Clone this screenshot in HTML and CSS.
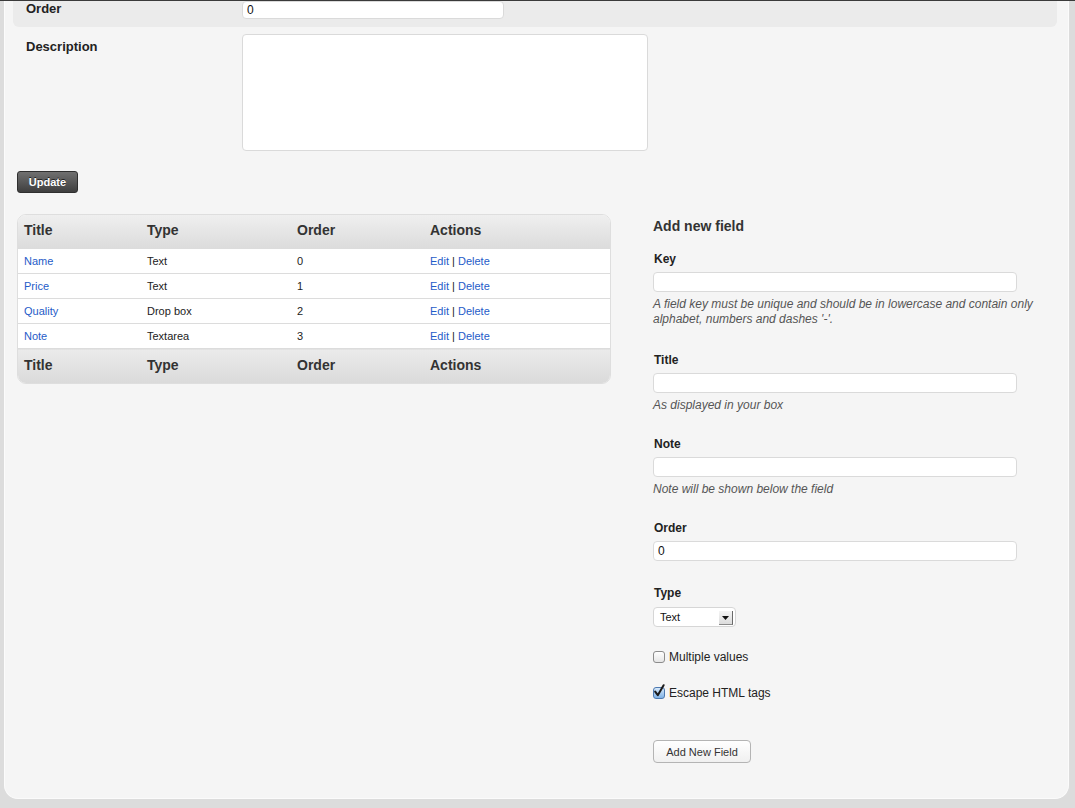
FILE: index.html
```html
<!DOCTYPE html>
<html>
<head>
<meta charset="utf-8">
<link rel="stylesheet" href="styles.css">
</head>
<body>
<div class="topline"></div>
<div class="panel">
  <div class="frow frow-shaded">
    <div class="flabel">Order</div>
    <div class="finput"><input class="txt txt-order" type="text" value="0"></div>
  </div>
  <div class="frow frow-desc">
    <div class="flabel flabel-desc">Description</div>
    <div class="finput"><textarea class="txt txt-desc"></textarea></div>
  </div>
  <button class="btn-dark">Update</button>

  <div class="cols">
    <div class="left">
      <div class="tbl-wrap">
        <table class="tbl">
          <colgroup><col class="c1"><col class="c2"><col class="c3"><col class="c4"></colgroup>
          <thead>
            <tr><th>Title</th><th>Type</th><th>Order</th><th>Actions</th></tr>
          </thead>
          <tbody>
            <tr><td><a href="#">Name</a></td><td>Text</td><td>0</td><td><a href="#">Edit</a> | <a href="#">Delete</a></td></tr>
            <tr><td><a href="#">Price</a></td><td>Text</td><td>1</td><td><a href="#">Edit</a> | <a href="#">Delete</a></td></tr>
            <tr><td><a href="#">Quality</a></td><td>Drop box</td><td>2</td><td><a href="#">Edit</a> | <a href="#">Delete</a></td></tr>
            <tr><td><a href="#">Note</a></td><td>Textarea</td><td>3</td><td><a href="#">Edit</a> | <a href="#">Delete</a></td></tr>
          </tbody>
          <tfoot>
            <tr><th>Title</th><th>Type</th><th>Order</th><th>Actions</th></tr>
          </tfoot>
        </table>
      </div>
    </div>
    <div class="right">
      <h3 class="rhead">Add new field</h3>
      <div class="grp grp-key">
        <div class="glabel">Key</div>
        <input class="txt txt-wide" type="text">
        <div class="gnote">A field key must be unique and should be in lowercase and contain only alphabet, numbers and dashes '-'.</div>
      </div>
      <div class="grp">
        <div class="glabel">Title</div>
        <input class="txt txt-wide" type="text">
        <div class="gnote">As displayed in your box</div>
      </div>
      <div class="grp">
        <div class="glabel">Note</div>
        <input class="txt txt-wide" type="text">
        <div class="gnote">Note will be shown below the field</div>
      </div>
      <div class="grp">
        <div class="glabel">Order</div>
        <input class="txt txt-wide" type="text" value="0">
      </div>
      <div class="grp grp-type">
        <div class="glabel glabel-type">Type</div>
        <div class="sel"><span class="sel-text">Text</span><span class="sel-arrow"><svg width="7" height="4" viewBox="0 0 7 4"><path d="M0 0H7L3.5 4Z" fill="#111"/></svg></span></div>
      </div>
      <div class="chk chk-first"><span class="cb"></span><span>Multiple values</span></div>
      <div class="chk"><span class="cb cb-on"><svg class="tick" width="12" height="14" viewBox="0 0 12 14"><path d="M2.2 7.6 L4.8 11.2 L10.6 1.2" fill="none" stroke="#1b1b1b" stroke-width="2" stroke-linecap="round" stroke-linejoin="round"/></svg></span><span>Escape HTML tags</span></div>
      <button class="btn-light">Add New Field</button>
    </div>
  </div>
</div>
</body>
</html>
```

FILE: styles.css
```css
html, body {
  margin: 0;
  padding: 0;
}
body {
  background: #dcdcdc;
  font-family: "Liberation Sans", Arial, Helvetica, sans-serif;
  color: #222;
  height: 808px;
  overflow: hidden;
}
.topline {
  height: 1px;
  background: #3a3a3a;
}
.panel {
  margin-left: 4px;
  width: 1065px;
  box-sizing: border-box;
  background: #f5f5f5;
  border: 1px solid #fbfbfb;
  border-top: none;
  border-radius: 0 0 14px 14px;
  padding: 0 15px 35px 12px;
}
.frow {
  display: flex;
  margin: 0 -4px;
  padding: 0 13px;
}
.frow-shaded {
  background: #ebebeb;
  border-radius: 0 0 6px 6px;
  padding-bottom: 8px;
}
.frow-desc {
  margin-top: 7px;
}
.flabel {
  width: 216px;
  flex: none;
  font-size: 13px;
  font-weight: bold;
  line-height: 16px;
  color: #222;
}
.flabel-desc {
  padding-top: 5px;
}
.txt {
  box-sizing: border-box;
  display: block;
  background: #fff;
  border: 1px solid #dadada;
  border-radius: 4px;
  font-family: "Liberation Sans", Arial, sans-serif;
  font-size: 12px;
  color: #111;
  padding: 0 4px;
  margin: 0;
  outline: none;
}
.txt-order {
  width: 262px;
  height: 18px;
}
.txt-desc {
  width: 406px;
  height: 117px;
  resize: none;
}
.btn-dark {
  display: block;
  margin-top: 20px;
  width: 61px;
  height: 22px;
  box-sizing: border-box;
  border: 1px solid #2f2f2f;
  border-radius: 3px;
  background: linear-gradient(#707070, #3f3f3f);
  color: #fff;
  font-family: "Liberation Sans", Arial, sans-serif;
  font-size: 11px;
  font-weight: bold;
  text-shadow: 0 -1px 0 #222;
  padding: 0;
}
.cols {
  display: flex;
  margin-top: 21px;
}
.left {
  width: 594px;
  flex: none;
}
.right {
  margin-left: 42px;
  flex: 1;
}
.tbl-wrap {
  border: 1px solid #dedede;
  border-radius: 9px;
  overflow: hidden;
  background: #fff;
}
.tbl {
  width: 100%;
  border-collapse: collapse;
  table-layout: fixed;
}
.c1 { width: 123px; }
.c2 { width: 150px; }
.c3 { width: 133px; }
.c4 { width: auto; }
.tbl th {
  text-align: left;
  font-size: 14px;
  font-weight: bold;
  color: #333;
  padding: 0 6px 3px;
  height: 30px;
  background: linear-gradient(#efefef, #dcdcdc);
}
.tbl tfoot th {
  height: 32px;
  padding-bottom: 2px;
  background: linear-gradient(#ebebeb, #dadada);
}
.tbl td {
  font-size: 11px;
  color: #222;
  padding: 0 6px;
  height: 24px;
  border-top: 1px solid #dcdcdc;
  background: #fff;
}
.tbl tbody tr:last-child td {
  border-bottom: 1px solid #dcdcdc;
}
.tbl a {
  color: #1f5cc8;
  text-decoration: none;
}
.rhead {
  margin: 4px 0 0;
  font-size: 14px;
  line-height: 17px;
  font-weight: bold;
  color: #333;
}
.grp {
  margin-top: 17px;
}
.grp + .grp {
  margin-top: 24px;
}
.grp-key {
  padding-bottom: 2px;
}
.grp-type {
  padding-top: 1px;
}
.glabel {
  font-size: 12px;
  font-weight: bold;
  line-height: 15px;
  color: #222;
  margin-bottom: 5px;
  padding-left: 1px;
}
.glabel-type {
  margin-bottom: 6px;
}
.txt-wide {
  width: 364px;
  height: 20px;
}
.gnote {
  margin-top: 5px;
  font-size: 12px;
  line-height: 15px;
  font-style: italic;
  color: #555;
  width: 400px;
}
.sel {
  width: 83px;
  height: 20px;
  box-sizing: border-box;
  border: 1px solid #d6d6d6;
  border-radius: 4px;
  background: #fff;
  display: flex;
  align-items: center;
  position: relative;
}
.sel-text {
  font-size: 11px;
  color: #111;
  padding-left: 6px;
  flex: 1;
}
.sel-arrow {
  width: 13px;
  height: 13px;
  margin-right: 2px;
  margin-top: 2px;
  background: linear-gradient(#f4f4f4, #dcdcdc);
  border-right: 1px solid #6a6a6a;
  border-bottom: 1px solid #8a8a8a;
  display: flex;
  align-items: center;
  justify-content: center;
}
.chk {
  display: flex;
  align-items: center;
  font-size: 12px;
  color: #222;
  height: 16px;
  margin-top: 20px;
}
.chk-first {
  margin-top: 22px;
}
.chk + .chk {
  margin-top: 20px;
}
.cb {
  width: 12px;
  height: 12px;
  box-sizing: border-box;
  border: 1px solid #8c8c8c;
  border-radius: 3px;
  background: linear-gradient(#ffffff, #e6e6e6);
  margin-right: 4px;
  position: relative;
  flex: none;
}
.cb-on {
  border-color: #4d79b0;
  background: linear-gradient(#d6e8fa, #7fb2e6);
}
.tick {
  position: absolute;
  left: -1px;
  top: -4px;
}
.btn-light {
  display: block;
  margin-top: 39px;
  width: 98px;
  height: 23px;
  box-sizing: border-box;
  border: 1px solid #b4b4b4;
  border-radius: 4px;
  background: linear-gradient(#ffffff, #f0f0f0);
  color: #333;
  font-family: "Liberation Sans", Arial, sans-serif;
  font-size: 11px;
  padding: 0;
}
```
